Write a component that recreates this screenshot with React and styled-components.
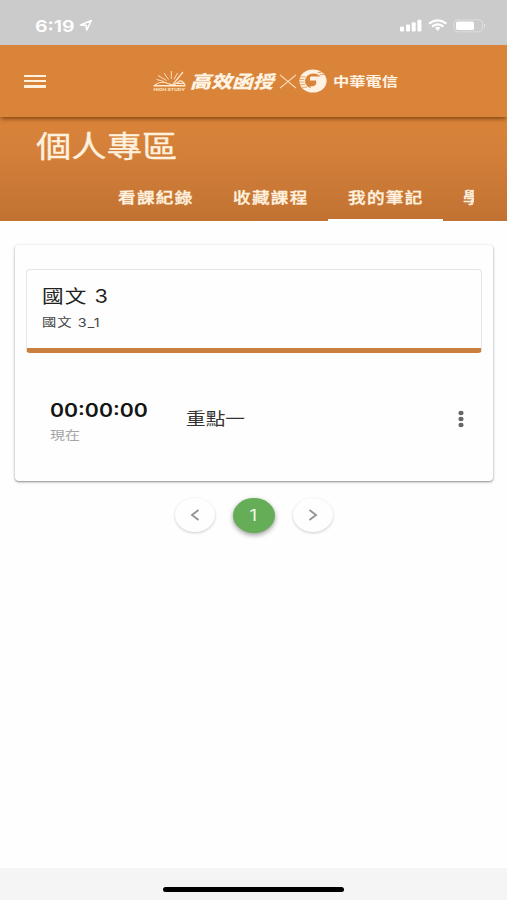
import React from 'react';
import styled, { createGlobalStyle } from 'styled-components';

const GlobalStyle = createGlobalStyle`
	* {
		box-sizing: border-box;
	}
	body {
		margin: 0;
		background-color: #fefefe;
		font-family: Inter, 'Noto Sans CJK TC', sans-serif;
	}
`;

const ScreenSC = styled.div`
	width: 100%;
	height: 900px;
	display: flex;
	flex-direction: column;
	overflow: hidden;
`;

// wide lettering, the box keeps its unscaled width
const WideText = styled.span`
	display: block;
	width: max-content;
	white-space: nowrap;
	transform: scaleX(${({ stretch }) => stretch || 1.19});
	transform-origin: ${({ origin }) => origin || 'left'} center;
`;

const StatusBarSC = styled.div`
	height: 45px;
	flex: none;
	display: flex;
	justify-content: space-between;
	padding: 16px 21px 0 35px;
	background-color: #cbcbcb;
	color: #fff;
`;

const ClockSC = styled.div`
	display: flex;
	gap: 11px;
	font-size: 16.5px;
	font-weight: 600;
	line-height: 20px;

	svg {
		margin-top: 3px;
	}
`;

const HeaderSC = styled.header`
	height: 72px;
	flex: none;
	display: flex;
	align-items: center;
	padding-left: 24px;
	background-color: #da8439;
	box-shadow: 0 3px 4px -1px rgba(90, 40, 0, .65);
	position: relative;
	z-index: 1;
	color: #fff4e4;
`;

const MenuButton = styled.button`
	width: 22px;
	height: 13px;
	padding: 0;
	border: 0;
	background: none;
	display: flex;
	flex-direction: column;
	justify-content: space-between;

	span {
		width: 22px;
		height: 2.6px;
		background-color: #fff1dd;
	}
`;

const BrandSC = styled.div`
	display: flex;
	align-items: center;
	margin-left: 107px;
`;

const StudyName = styled.div`
	width: 89px;
	margin: 2px 0 0 4px;
	font-size: 17.6px;
	font-style: italic;
	font-weight: 900;
	line-height: 24px;
`;

const TelecomName = styled.div`
	margin-left: 6px;
	font-size: 13px;
	font-weight: 700;
	line-height: 20px;
`;

const SectionSC = styled.section`
	height: 104px;
	flex: none;
	display: flex;
	flex-direction: column;
	justify-content: space-between;
	background-image: linear-gradient(to bottom, #d98339 0%, #d5803a 30%, #c17232 100%);
	color: #fff1df;

	h1 {
		margin: 11px 0 0 36px;
		font-size: 29.7px;
		font-weight: 400;
		line-height: 36px;
		-webkit-text-stroke: .3px;
	}
`;

const TabsSC = styled.nav`
	display: flex;
	width: 376px;
	margin-left: 98px;
	overflow: hidden;
`;

const TabSC = styled.a`
	width: 115px;
	height: 48px;
	flex: none;
	padding: 14px 0 0 20px;
	font-size: 14.8px;
	font-weight: 500;
	line-height: 22px;
	letter-spacing: 1.1px;
	-webkit-text-stroke: .35px;
	border-bottom: 2px solid ${({ active }) => active ? '#fff' : 'transparent'};
`;

const CardSC = styled.main`
	height: 236px;
	flex: none;
	margin: 24px 14px 0 15px;
	padding: 24px 11px 0;
	border-radius: 4px;
	background-color: #fefefe;
	box-shadow: 0 1px 2px rgba(0, 0, 0, .38), 0 1px 4px rgba(0, 0, 0, .12);
`;

const CourseSC = styled.div`
	height: 84px;
	padding: 14px 15px 0;
	border: 1px solid #e6e6e6;
	border-bottom: 5px solid #cb7f3e;
	border-radius: 4px;

	h2 {
		margin: 0;
		font-size: 18.2px;
		font-weight: 400;
		line-height: 24px;
		letter-spacing: .9px;
		color: #222;
	}
	p {
		margin: 5px 0 0;
		font-size: 12px;
		line-height: 20px;
		letter-spacing: .9px;
		color: #444;
	}
`;

const NoteSC = styled.div`
	display: flex;
	align-items: center;
	height: 132px;
	padding: 0 16px 0 24px;
`;

const TimeSC = styled.div`
	width: 136px;
	padding-top: 6px;

	strong {
		display: block;
		font-size: 19px;
		font-weight: 600;
		line-height: 24px;
		color: #151515;
	}
	small {
		display: block;
		margin-top: 3px;
		font-size: 12.5px;
		line-height: 20px;
		color: #a5a5a5;
	}
`;

const NoteTitle = styled.div`
	flex: 1;
	font-size: 16.5px;
	line-height: 24px;
	color: #333;
`;

const MoreButton = styled.button`
	display: flex;
	padding: 0;
	border: 0;
	background: none;
`;

const PagerSC = styled.div`
	display: flex;
	justify-content: center;
	gap: 18px;
	margin-top: 17px;
`;

const PageButton = styled.button`
	width: ${({ active }) => active ? 42 : 40}px;
	height: ${({ active }) => active ? 35 : 34}px;
	display: flex;
	align-items: center;
	justify-content: center;
	padding: 0;
	border: 0;
	border-radius: 50%;
	background-color: ${({ active }) => active ? '#65ad57' : '#fefefe'};
	color: ${({ active }) => active ? '#f0f8ee' : '#8a8a8a'};
	font-family: inherit;
	font-size: 15.5px;
	box-shadow: ${({ active }) => active
		? '0 2px 5px rgba(0, 0, 0, .4)'
		: '0 1px 3px rgba(0, 0, 0, .2)'};
`;

const HomeBarSC = styled.footer`
	height: 32px;
	flex: none;
	margin-top: auto;
	padding-top: 19px;
	background-color: #f5f5f5;

	div {
		width: 181px;
		height: 5px;
		margin-left: 163px;
		border-radius: 3px;
		background-color: #000;
	}
`;

const LocationIcon = () => (
	<svg width="14" height="13" viewBox="0 0 14 13">
		<path d="M1.5 6 L12.3 1.5 L7.8 11 L7 6.4 Z" fill="none" stroke="#fff" strokeWidth="1.6" strokeLinejoin="round" />
	</svg>
);

const StatusIcons = () => (
	<svg width="88" height="18" viewBox="0 0 88 18">
		<g fill="#fff">
			<rect x="2" y="10.5" width="4" height="5" rx="1" />
			<rect x="8" y="8.5" width="4" height="7" rx="1" />
			<rect x="13.7" y="6.2" width="4" height="9.3" rx="1" />
			<rect x="19.4" y="3.8" width="4" height="11.7" rx="1" />
			<path d="M37 11.8 a4 3 0 0 1 5.4 0 L39.7 15 Z" />
			<rect x="58" y="5.5" width="18" height="8.5" rx="1.8" />
			<path d="M86 7.3 v5 q2 -2.5 0 -5z" opacity=".55" />
		</g>
		<g fill="none" stroke="#fff" strokeWidth="2.1">
			<path d="M31 7.6 Q39.7 1.2 48.4 7.6" />
			<path d="M34 10.6 Q39.7 6.2 45.4 10.6" />
			<rect x="56" y="3.8" width="28.5" height="12" rx="3.5" strokeWidth="1" opacity=".35" />
		</g>
	</svg>
);

const BookLogo = () => (
	<svg width="33" height="22" viewBox="0 0 33 22">
		<g fill="none" stroke="#ffe8ce" strokeWidth="1.2">
			<path d="M2 14.8 Q7 11.5 12 12.5 L19.5 15 L30 2" />
			<path d="M21 15 L27 10.8 Q30 10.5 32 15" />
			<path d="M13.5 10.5 L5 5.5 M15.5 9.5 L11 3 M18.3 9 V1 M21 9.5 L24.5 3 M11 11.5 L3.5 9.5" strokeWidth=".9" />
			<path d="M0.5 15.8 H32.5" strokeWidth="1.5" />
			<path d="M24 13.4 H31" strokeWidth="1.2" />
		</g>
		<text x="0.5" y="20.8" fill="#ffe0bd" fontFamily="Inter" fontSize="3.8" fontWeight="800" textLength="31.5" lengthAdjust="spacingAndGlyphs">HIGH STUDY</text>
	</svg>
);

const CrossIcon = () => (
	<svg width="18" height="15" viewBox="0 0 18 15">
		<path d="M1 0.8 L17 14.2 M17 0.8 L1 14.2" stroke="#ffe3c6" strokeWidth="1.1" />
	</svg>
);

// striped globe, the solid hook sits in its lower right
const TelecomLogo = styled(({ className }) => (
	<svg className={className} width="28" height="24" viewBox="0 0 28 24">
		<ellipse cx="14" cy="12" rx="13.6" ry="11.6" fill="#fff2e2" />
		<ellipse cx="14.5" cy="12" rx="8.6" ry="7.6" fill="#da8439" />
		<path d="M11 11.4 V8.6 Q11 7.4 12.5 7.4 H21 Q24 9 24 12.5 Q24 19 17 20.8 H11.5 V17.2 H14 Q17.2 16.6 17.2 14 V11.4 Z" fill="#fff2e2" />
		<path d="M1 7.8 H6.5 M0 10.4 H5.5 M0 13 H5.5 M1 15.6 H6 M3 18.2 H8 M18.5 3.4 H22.5 M20.5 5.6 H25" fill="none" stroke="#da8439" strokeWidth=".7" />
	</svg>
))`
	margin-left: 2px;
`;

const MoreIcon = () => (
	<svg width="10" height="18" viewBox="0 0 10 18" fill="#666">
		<ellipse cx="5" cy="3" rx="2.6" ry="2.2" />
		<ellipse cx="5" cy="9" rx="2.6" ry="2.2" />
		<ellipse cx="5" cy="15" rx="2.6" ry="2.2" />
	</svg>
);

const Arrow = ({ d }) => (
	<svg width="10" height="12" viewBox="0 0 10 12">
		<path d={d} fill="none" stroke="#929292" strokeWidth="1.8" />
	</svg>
);

const tabs = ['看課紀錄', '收藏課程', '我的筆記', '學'];

const App = () => (
	<ScreenSC>
		<GlobalStyle />
		<StatusBarSC>
			<ClockSC>
				<WideText>6:19</WideText>
				<LocationIcon />
			</ClockSC>
			<StatusIcons />
		</StatusBarSC>
		<HeaderSC>
			<MenuButton aria-label="menu"><span /><span /><span /></MenuButton>
			<BrandSC>
				<BookLogo />
				<StudyName><WideText>高效函授</WideText></StudyName>
				<CrossIcon />
				<TelecomLogo />
				<TelecomName><WideText stretch={1.25}>中華電信</WideText></TelecomName>
			</BrandSC>
		</HeaderSC>
		<SectionSC>
			<h1><WideText>個人專區</WideText></h1>
			<TabsSC>
				{tabs.map(tab => (
					<TabSC key={tab} active={tab === '我的筆記' ? 1 : 0}><WideText>{tab}</WideText></TabSC>
				))}
			</TabsSC>
		</SectionSC>
		<CardSC>
			<CourseSC>
				<h2><WideText>國文 3</WideText></h2>
				<p><WideText>國文 3_1</WideText></p>
			</CourseSC>
			<NoteSC>
				<TimeSC>
					<strong><WideText stretch={1.12}>00:00:00</WideText></strong>
					<small><WideText>現在</WideText></small>
				</TimeSC>
				<NoteTitle><WideText>重點一</WideText></NoteTitle>
				<MoreButton aria-label="more"><MoreIcon /></MoreButton>
			</NoteSC>
		</CardSC>
		<PagerSC>
			<PageButton><Arrow d="M8.5 1 L2 6 L8.5 11" /></PageButton>
			<PageButton active={1}><WideText origin="center">1</WideText></PageButton>
			<PageButton><Arrow d="M1.5 1 L8 6 L1.5 11" /></PageButton>
		</PagerSC>
		<HomeBarSC><div /></HomeBarSC>
	</ScreenSC>
);

export default App;
